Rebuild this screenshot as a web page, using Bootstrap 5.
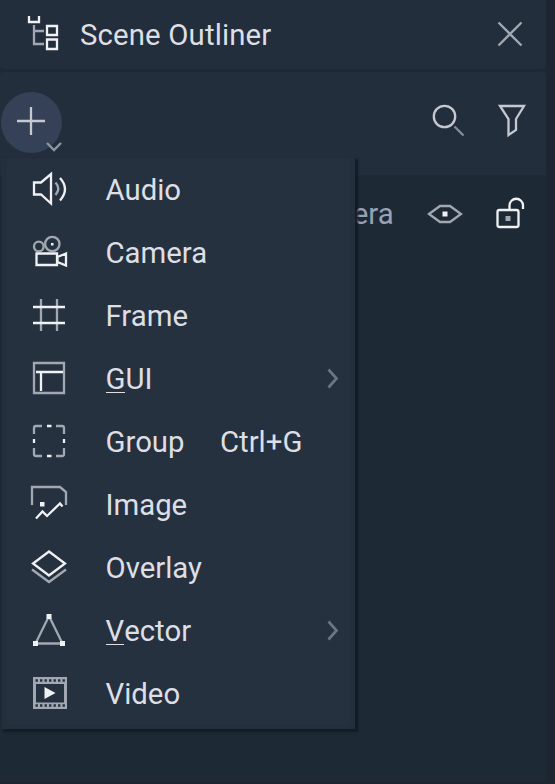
<!DOCTYPE html>
<html lang="en">
<head>
<meta charset="utf-8">
<meta name="viewport" content="width=device-width, initial-scale=1">
<title>Scene Outliner</title>
<link href="https://cdn.jsdelivr.net/npm/bootstrap@5.3.0/dist/css/bootstrap.min.css" rel="stylesheet">
<style>
body{background:#1f2530;color:#dddfe4;font-family:Roboto,"Liberation Sans",sans-serif;font-size:29.33px;line-height:1.2;font-weight:400}
.panel{width:546px;height:782px;background:#1e2936}
.titlebar{height:69px;background:#232e3d;border-radius:0 0 4px 4px;padding-left:24px;padding-right:19px}
.toolbar{height:103px;margin-top:3px;background:#232e3d;border-radius:4px 4px 0 0;padding-right:14px}
.title-text{margin-left:8px;padding-top:2px;letter-spacing:.15px}
.add-btn{width:66px;height:66px;margin-top:-3px}
.tree-row{height:76px;color:#98a2b4;padding-left:292px;padding-right:14px}
.tree-name{padding-top:3px}
.scene-menu{top:158px;left:2px;width:353px;height:571px;background:#263140;border:solid #242f3e;border-width:0 5px 5px;border-radius:0;padding:0;color:#dddfe4;box-shadow:2px 2px 2px 1px #131b26;font-size:inherit;clip-path:inset(-1px -8px -8px 0)}
.menu-row{height:63px;padding:0 9px 0 9px}
.menu-row .label{margin-left:23.5px}
.menu-row .label,.shortcut{padding-top:2px}
.mnemonic{border-bottom:1px solid #dddfe4;display:inline-block;line-height:25px}
.shortcut{margin-left:35.5px}
svg{fill:none;stroke:#f0f1f3;stroke-width:2.3;flex:none;display:block}
.dim{stroke:#a2a8b1}
.solid{fill:#f0f1f3;stroke:none}
.soft{stroke:#c5c9cf}
</style>
<script src="https://cdn.jsdelivr.net/npm/bootstrap@5.3.0/dist/js/bootstrap.bundle.min.js"></script>
</head>
<body class="overflow-hidden">
<main class="panel position-relative">
  <header class="titlebar d-flex align-items-center">
    <svg width="48" height="69" viewBox="24 0 48 69"><path class="dim" d="M34 25V44H44M34 31H44"/><path d="M29 16V22H39V16M47 26H57V35H47ZM47 39.5H57V49H47Z"/></svg>
    <span class="title-text">Scene Outliner</span>
    <svg class="ms-auto" width="34" height="69" viewBox="493 0 34 69"><path class="dim" d="M498.5 22.500L521.5 45.500M521.5 22.500L498.5 45.500"/></svg>
  </header>
  <div class="toolbar d-flex align-items-center">
    <svg class="add-btn" width="66" height="66" viewBox="0 89 66 66"><circle cx="31.5" cy="122.5" r="30.5" fill="#354157" stroke="none"/><path class="soft" d="M17 121H45M31 107V135"/><path stroke="#8e96a2" d="M47 143L54 150L61 143"/></svg>
    <svg class="ms-auto" width="40" height="103" viewBox="428 72 40 103"><circle class="soft" cx="444.5" cy="116.5" r="10.7"/><path stroke="#858d99" d="M454.5 126.5L463.5 135.5"/></svg>
    <svg width="64" height="103" viewBox="468 72 64 103"><path class="soft" d="M500 106H524L516 119V130L508.5 135V119Z"/></svg>
  </div>
  <div class="tree-row d-flex align-items-center">
    <span class="tree-name">Camera</span>
    <svg class="ms-auto" width="48" height="76" viewBox="420 175 48 76"><path class="dim" d="M429 214L440 206H450L461 214L450 222H440Z"/><path class="solid" d="M442.5 211.500H447.500V216.500H442.500Z"/></svg>
    <svg width="64" height="76" viewBox="468 175 64 76"><rect x="497.500" y="210" width="21" height="17" rx="2"/><path d="M509.500 210V205.500A6.700 6.700 0 0 1 523 205.500V209"/><path fill="#a2a8b1" stroke="none" d="M505.500 216H510.500V221H505.500Z"/></svg>
  </div>

  <div class="scene-menu dropdown-menu show position-absolute">
    <div class="menu-row d-flex align-items-center">
      <svg width="66" height="63" viewBox="16 0 66 63"><path d="M34 24.500H41L51 16V45.500L41 36.500H34Z"/><path class="dim" d="M55.500 24.500Q61 30.500 55.500 37"/><path d="M60 20Q70 31 60 42.500"/></svg>
      <span class="label">Audio</span>
    </div>
    <div class="menu-row d-flex align-items-center">
      <svg width="66" height="63" viewBox="16 0 66 63"><g class="dim"><circle cx="38.800" cy="25.500" r="4.800"/><circle cx="52.300" cy="23" r="7.200"/></g><path d="M36.500 32.500H57V44H36.500ZM66 32.500L57.500 36V41L66 44.500Z"/><path class="solid" d="M51 22H53.500V24.500H51Z"/></svg>
      <span class="label">Camera</span>
    </div>
    <div class="menu-row d-flex align-items-center">
      <svg width="66" height="63" viewBox="16 0 66 63"><path class="dim" d="M41 15V47M57 15V47"/><path d="M33 23H65M33 39H65"/></svg>
      <span class="label">Frame</span>
    </div>
    <div class="menu-row d-flex align-items-center">
      <svg width="66" height="63" viewBox="16 0 66 63"><path class="dim" d="M34 16H64V46H34Z"/><path d="M36 25H63M41 25V44"/></svg>
      <span class="label"><span class="mnemonic">G</span>UI</span>
      <svg class="ms-auto" width="16" height="63" viewBox="325 0 16 63"><path stroke="#6c7580" stroke-width="2.700" d="M328.500 22.500L336.500 31.500L328.500 40.500"/></svg>
    </div>
    <div class="menu-row d-flex align-items-center">
      <svg width="66" height="63" viewBox="16 0 66 63"><path class="dim" d="M34 24V18Q34 16 36 16H42M56 16H62Q64 16 64 18V24M64 38V44Q64 46 62 46H56M42 46H36Q34 46 34 44V38"/><path d="M47 16H51.500M47 46H51.500M34 29V33M64 29V33"/></svg>
      <span class="label">Group</span><span class="shortcut">Ctrl+G</span>
    </div>
    <div class="menu-row d-flex align-items-center">
      <svg width="66" height="63" viewBox="16 0 66 63"><path class="dim" d="M32 32V14H60L66 19V32"/><path d="M36 45.500L42.500 38.500L47 43L60 30.500L62.500 33.500"/><path class="solid" d="M40 29H44.500V33.500H40Z"/></svg>
      <span class="label">Image</span>
    </div>
    <div class="menu-row d-flex align-items-center">
      <svg width="66" height="63" viewBox="16 0 66 63"><path class="dim" d="M32 33.500L49 46L66 33.500"/><path d="M49 15.500L65 27.500L49 39.500L33 27.500Z"/></svg>
      <span class="label">Overlay</span>
    </div>
    <div class="menu-row d-flex align-items-center">
      <svg width="66" height="63" viewBox="16 0 66 63"><path class="dim" d="M49 17L62.500 44.500H35.500Z"/><path class="solid" d="M46.500 15H51.500V20H46.500ZM33 42H38V47H33ZM60 42H65V47H60Z"/></svg>
      <span class="label"><span class="mnemonic">V</span>ector</span>
      <svg class="ms-auto" width="16" height="63" viewBox="325 0 16 63"><path stroke="#6c7580" stroke-width="2.700" d="M328.500 22.500L336.500 31.500L328.500 40.500"/></svg>
    </div>
    <div class="menu-row d-flex align-items-center">
      <svg width="66" height="63" viewBox="16 0 66 63"><path fill="#a2a8b1" stroke="none" fill-rule="evenodd" d="M33 15H67V47H33ZM36 22V40.500H64V22Z"/><path stroke="#263140" stroke-width="2.400" stroke-dasharray="2.400 2.100" d="M35.500 18.500H65M35.500 43.500H65"/><path class="solid" d="M44.500 25L55.500 31L44.500 37Z"/></svg>
      <span class="label">Video</span>
    </div>
  </div>
</main>
</body>
</html>
